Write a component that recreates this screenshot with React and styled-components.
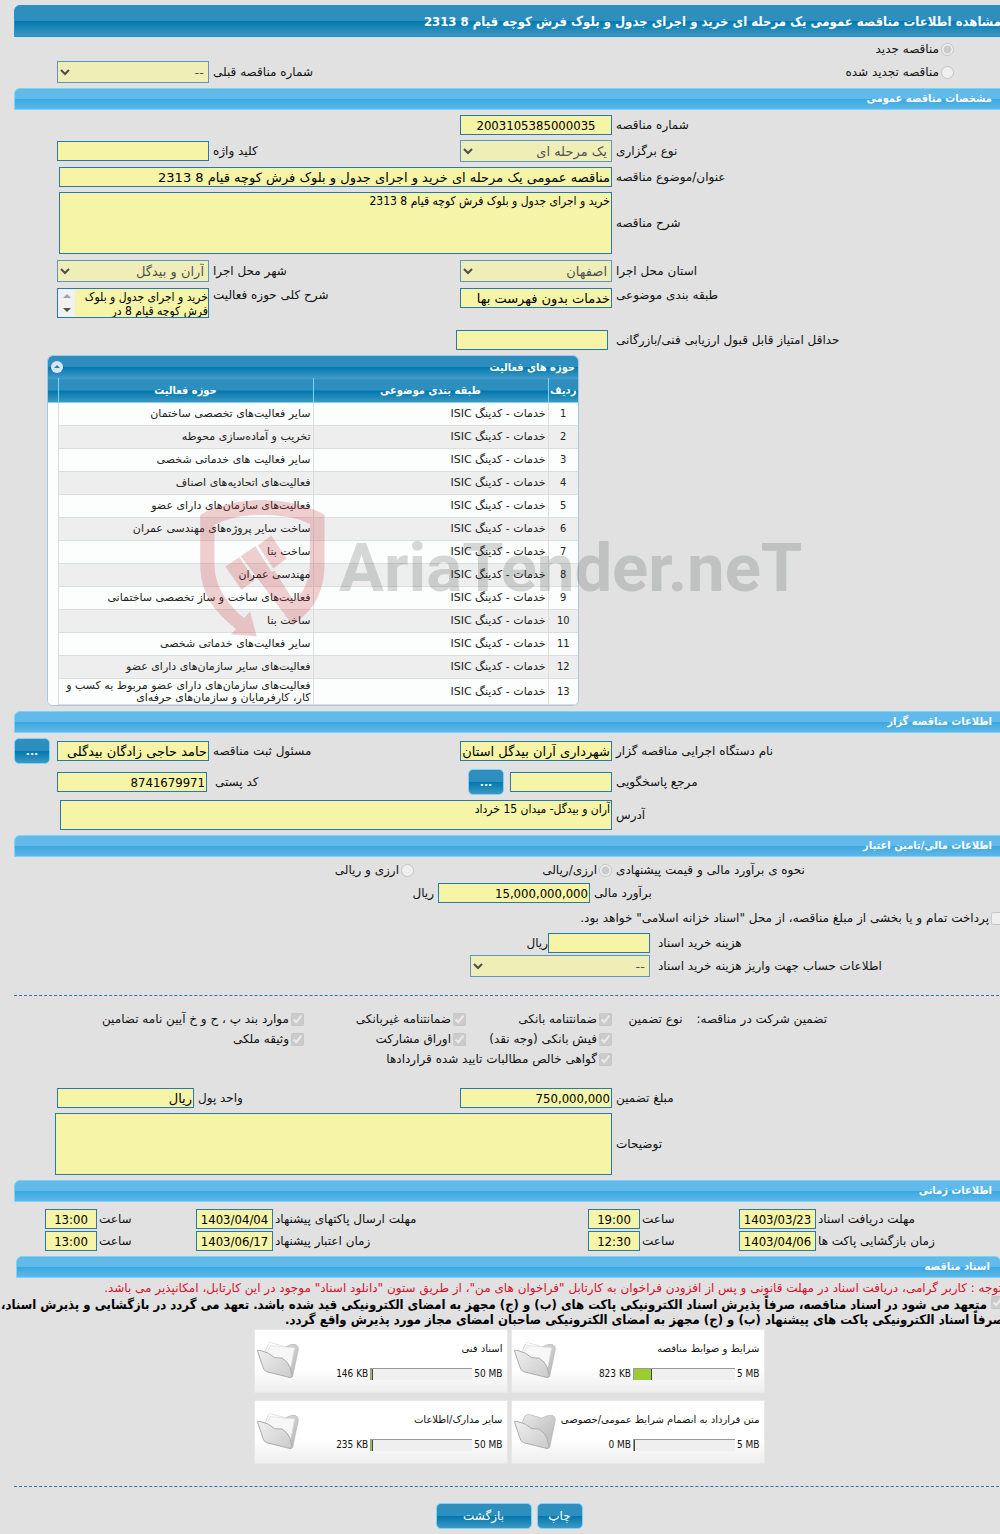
import React, { useId } from "react";
import styled, { createGlobalStyle } from "styled-components";

const activities = [
  "سایر فعالیت‌های تخصصی ساختمان",
  "تخریب و آماده‌سازی محوطه",
  "سایر فعالیت های خدماتی شخصی",
  "فعالیت‌های اتحادیه‌های اصناف",
  "فعالیت‌های سازمان‌های دارای عضو",
  "ساخت سایر پروژه‌های مهندسی عمران",
  "ساخت بنا",
  "مهندسی عمران",
  "فعالیت‌های ساخت و ساز تخصصی ساختمانی",
  "ساخت بنا",
  "سایر فعالیت‌های خدماتی شخصی",
  "فعالیت‌های سایر سازمان‌های دارای عضو",
  "فعالیت‌های سازمان‌های دارای عضو مربوط به کسب و کار، کارفرمایان و سازمان‌های حرفه‌ای"
];

const documents = [
  { title: "شرایط و ضوابط مناقصه", used: "823 KB", limit: "5 MB", percent: 18, full: true },
  { title: "اسناد فنی", used: "146 KB", limit: "50 MB", percent: 2, full: true },
  { title: "متن قرارداد به انضمام شرایط عمومی/خصوصی", used: "0 MB", limit: "5 MB", percent: 1, full: false },
  { title: "سایر مدارک/اطلاعات", used: "235 KB", limit: "50 MB", percent: 2, full: true }
];

const guarantees = [
  "ضمانتنامه بانکی",
  "ضمانتنامه غیربانکی",
  "موارد بند پ ، ح و خ آیین نامه تضامین",
  "فیش بانکی (وجه نقد)",
  "اوراق مشارکت",
  "وثیقه ملکی"
];

/**
 * Label and its text box. They are two cells of the surrounding row grid.
 */
function TextField({ label, value = "", align, pad }) {
  const id = useId();
  return (
    <>
      <Label htmlFor={id} $pad={pad}>{label}</Label>
      <Input
        id={id}
        defaultValue={value}
        $align={align}
        $numeric={/^[\d,:/]+$/.test(value)}
        readOnly
      />
    </>
  );
}

function SelectField({ label, value, pad }) {
  const id = useId();
  return (
    <>
      <Label htmlFor={id} $pad={pad}>{label}</Label>
      <Select id={id} disabled>
        <option>{value}</option>
      </Select>
    </>
  );
}

function AreaField({ label, value, height }) {
  const id = useId();
  return (
    <>
      <Label htmlFor={id}>{label}</Label>
      <TextArea id={id} defaultValue={value} $height={height} readOnly />
    </>
  );
}

function Option({ type = "checkbox", label, checked, name, wide }) {
  return (
    <OptionLabel $wide={wide}>
      <Tick type={type} name={name} defaultChecked={checked} disabled />
      {label}
    </OptionLabel>
  );
}

function ScrollField({ label, value }) {
  const id = useId();
  return (
    <>
      <Label htmlFor={id}>{label}</Label>
      <ScrollBox>
        <ScrollText id={id} defaultValue={value} readOnly />
        <ScrollBar aria-hidden="true">
          <svg width="8" height="4"><path d="M0 4 L4 0 L8 4Z" fill="#a3a3a3" /></svg>
          <svg width="8" height="4"><path d="M0 0 L4 4 L8 0Z" fill="#505050" /></svg>
        </ScrollBar>
      </ScrollBox>
    </>
  );
}

function ActivityPanel() {
  return (
    <Panel>
      <PanelTitle>
        حوزه های فعالیت
        <Collapse type="button" aria-label="بستن">
          <svg width="12" height="12" viewBox="0 0 12 12">
            <path d="M3 7 L6 4 L9 7Z" fill="#2e7fae" />
          </svg>
        </Collapse>
      </PanelTitle>
      <Table>
        <colgroup>
          <col width="30" />
          <col width="235" />
          <col width="255" />
          <col />
        </colgroup>
        <thead>
          <tr>
            <th>ردیف</th>
            <th>طبقه بندی موضوعی</th>
            <th>حوزه فعالیت</th>
            <th />
          </tr>
        </thead>
        <tbody>
          {activities.map((activity, index) => (
            <tr key={index}>
              <td>{index + 1}</td>
              <td>خدمات - کدینگ ISIC</td>
              <td>{activity}</td>
              <td />
            </tr>
          ))}
        </tbody>
      </Table>
    </Panel>
  );
}

function Folder({ full }) {
  return (
    <svg width="44" height="40" viewBox="0 0 132 120" aria-hidden="true">
      <defs>
        <linearGradient id="folderBack" x1="0" y1="0" x2="1" y2="1">
          <stop offset="0" stopColor="#e8e8e8" />
          <stop offset="1" stopColor="#b4b4b4" />
        </linearGradient>
        <linearGradient id="folderFront" x1="0" y1="0" x2="1" y2="1">
          <stop offset="0" stopColor="#f0f0f0" />
          <stop offset="1" stopColor="#cacaca" />
        </linearGradient>
      </defs>
      <path
        d="M26 36 L36 12 Q40 6 50 8 L78 16 Q86 20 92 16 L104 11 Q126 6 127 24 L110 106 Q106 112 98 108 L80 60Z"
        fill="url(#folderBack)"
        stroke="#b4b4b4"
        strokeWidth="2"
      />
      {full && (
        <>
          <path d="M26 36 L40 4 L88 17 L100 92Z" fill="#fff" stroke="#dcdcdc" strokeWidth="2" />
          <path d="M30 38 L44 14 L116 20 L103 88Z" fill="#f7f7f7" stroke="#d8d8d8" strokeWidth="2" />
        </>
      )}
      <path
        d="M4 28 L12 28 Q40 34 56 50 L78 51 Q94 60 102 78 L108 104 Q108 112 92 107 L32 92 Q22 88 20 76Z"
        fill="url(#folderFront)"
        stroke="#acacac"
        strokeWidth="3"
        strokeLinejoin="round"
      />
    </svg>
  );
}

function DocumentCard({ doc }) {
  return (
    <Card>
      <CardBody>
        <span>{doc.title}</span>
        <Usage>
          <span>{doc.used}</span>
          <UsageBar>
            <UsageFill $empty={!doc.full} style={{ width: `${doc.percent}%` }} />
          </UsageBar>
          <span>{doc.limit}</span>
        </Usage>
      </CardBody>
      <Folder full={doc.full} />
    </Card>
  );
}

function Watermark() {
  return (
    <WatermarkBox aria-hidden="true">
      <svg width="125" height="137" viewBox="510 300 375 412" fill="rgba(200, 50, 60, 0.23)">
        <path d="M510 345 C560 315 630 300 697 300 S840 318 884 345 V490 C884 590 840 640 788 676 L632 469 L676 439 L724 515 L734 513 L792 605 C825 575 838 540 840 490 V372 C800 352 750 345 697 345 S600 352 553 375 V490 C553 560 590 610 642 655 L660 635 L680 710 L602 704 L618 688 C560 640 510 590 510 490Z" />
        <path d="M586 500 L628 472 L674 541 L634 570Z" />
        <path d="M684 437 L724 407 L770 476 L730 506Z" />
      </svg>
      <Brand>AriaTender.neT</Brand>
    </WatermarkBox>
  );
}

/**
 * Read only view of a single-stage public tender
 */
export default function App() {
  return (
    <Page dir="rtl" lang="fa">
      <GlobalStyle />
      <TitleBar>مشاهده اطلاعات مناقصه عمومی یک مرحله ای خرید و اجرای جدول و بلوک فرش کوچه قیام 8 2313</TitleBar>
      <Form $gap={0} $top={0}>
        <Row $cols="50px 1fr" $height={24}>
          <span />
          <Option type="radio" name="kind" label="مناقصه جدید" checked />
        </Row>
        <Row $cols="50px 1fr 251px 152px 43px">
          <span />
          <Option type="radio" name="kind" label="مناقصه تجدید شده" />
          <SelectField label="شماره مناقصه قبلی" value="--" />
        </Row>
      </Form>

      <SectionBar>مشخصات مناقصه عمومی</SectionBar>
      <Form>
        <Row $cols="392px 152px">
          <TextField label="شماره مناقصه" value="2003105385000035" align="center" />
        </Row>
        <Row>
          <SelectField label="نوع برگزاری" value="یک مرحله ای" />
          <TextField label="کلید واژه" />
        </Row>
        <Row $cols="392px 1fr 45px">
          <TextField
            label="عنوان/موضوع مناقصه"
            value="مناقصه عمومی یک مرحله ای خرید و اجرای جدول و بلوک فرش کوچه قیام 8 2313"
          />
        </Row>
        <Row $cols="392px 1fr 45px">
          <AreaField label="شرح مناقصه" value="خرید و اجرای جدول و بلوک فرش کوچه قیام 8 2313" height={62} />
        </Row>
        <Row $height={24}>
          <SelectField label="استان محل اجرا" value="اصفهان" />
          <SelectField label="شهر محل اجرا" value="آران و بیدگل" />
        </Row>
        <Row $align="start" $height={37}>
          <TextField label="طبقه بندی موضوعی" value="خدمات بدون فهرست بها" />
          <ScrollField label="شرح کلی حوزه فعالیت" value="خرید و اجرای جدول و بلوک فرش کوچه قیام 8 در محدوده" />
        </Row>
        <Row $cols="396px 152px">
          <TextField label="حداقل امتیاز قابل قبول ارزیابی فنی/بازرگانی" pad={8} />
        </Row>
        <ActivityPanel />
      </Form>

      <SectionBar>اطلاعات مناقصه گزار</SectionBar>
      <Form>
        <Row>
          <TextField label="نام دستگاه اجرایی مناقصه گزار" value="شهرداری آران بیدگل استان اصفهان" />
          <TextField label="مسئول ثبت مناقصه" value="حامد حاجی زادگان بیدگلی" />
          <MoreButton type="button">...</MoreButton>
        </Row>
        <Row $cols="392px 102px 42px 1fr 150px 43px">
          <TextField label="مرجع پاسخگویی" />
          <MoreButton type="button">...</MoreButton>
          <TextField label="کد پستی" value="8741679971" pad={8} />
        </Row>
        <Row $cols="392px 1fr 46px">
          <AreaField label="آدرس" value="آران و بیدگل- میدان 15 خرداد" height={30} />
        </Row>
      </Form>

      <SectionBar>اطلاعات مالی/تامین اعتبار</SectionBar>
      <Form>
        <Row $cols="392px 198px 1fr" $height={16}>
          <Label as="span">نحوه ی برآورد مالی و قیمت پیشنهادی</Label>
          <Option type="radio" name="currency" label="ارزی/ریالی" checked />
          <Option type="radio" name="currency" label="ارزی و ریالی" />
        </Row>
        <Row $cols="414px 152px 1fr">
          <TextField label="برآورد مالی" value="15,000,000,000" />
          <Unit>ریال</Unit>
        </Row>
        <Row $cols="1fr">
          <Option label={'پرداخت تمام و یا بخشی از مبلغ مناقصه، از محل "اسناد خزانه اسلامی" خواهد بود.'} />
        </Row>
        <Stack>
          <Row $cols="354px 102px 1fr">
            <TextField label="هزینه خرید اسناد" pad={8} />
            <span>ریال</span>
          </Row>
          <Row $cols="354px 180px">
            <SelectField label="اطلاعات حساب جهت واریز هزینه خرید اسناد" value="--" pad={8} />
          </Row>
        </Stack>
      </Form>

      <Divider />
      <Guarantee>
        <GuaranteeHead>
          <span>تضمین شرکت در مناقصه:</span>
          <span>نوع تضمین</span>
        </GuaranteeHead>
        <OptionGrid>
          {guarantees.map(label => (
            <Option key={label} label={label} checked />
          ))}
          <Option label="گواهی خالص مطالبات تایید شده قراردادها" checked wide />
        </OptionGrid>
      </Guarantee>
      <Form $top={19}>
        <Row $cols="392px 152px 1fr 137px 43px">
          <TextField label="مبلغ تضمین" value="750,000,000" />
          <TextField label="واحد پول" value="ریال" />
        </Row>
        <Row $cols="392px 1fr 41px">
          <AreaField label="توضیحات" height={62} />
        </Row>
      </Form>

      <SectionBar>اطلاعات زمانی</SectionBar>
      <Form $gap={2} $top={7}>
        <Row $cols={timeColumns}>
          <TextField label="مهلت دریافت اسناد" value="1403/03/23" align="center" pad={2} />
          <TextField label="ساعت" value="19:00" align="center" pad={2} />
          <TextField label="مهلت ارسال پاکتهای پیشنهاد" value="1403/04/04" align="center" pad={2} />
          <TextField label="ساعت" value="13:00" align="center" pad={2} />
        </Row>
        <Row $cols={timeColumns}>
          <TextField label="زمان بازگشایی پاکت ها" value="1403/04/06" align="center" pad={2} />
          <TextField label="ساعت" value="12:30" align="center" pad={2} />
          <TextField label="زمان اعتبار پیشنهاد" value="1403/06/17" align="center" pad={2} />
          <TextField label="ساعت" value="13:00" align="center" pad={2} />
        </Row>
      </Form>

      <SectionBar $rounded>اسناد مناقصه</SectionBar>
      <Notice>
        توجه : کاربر گرامی، دریافت اسناد در مهلت قانونی و پس از افزودن فراخوان به کارتابل "فراخوان های من"، از طریق ستون "دانلود اسناد" موجود در این کارتابل، امکانپذیر می باشد.
      </Notice>
      <Pledge>
        <Tick type="checkbox" defaultChecked disabled />{" "}
        متعهد می شود در اسناد مناقصه، صرفاً پذیرش اسناد الکترونیکی پاکت های (ب) و (ج) مجهز به امضای الکترونیکی قید شده باشد. تعهد می گردد در بازگشایی و پذیرش اسناد،
        <br />
        صرفاً اسناد الکترونیکی پاکت های پیشنهاد (ب) و (ج) مجهز به امضای الکترونیکی صاحبان امضای مجاز مورد پذیرش واقع گردد.
      </Pledge>
      <Cards>
        {documents.map(doc => (
          <DocumentCard key={doc.title} doc={doc} />
        ))}
      </Cards>

      <Divider />
      <Actions>
        <ActionButton type="button">چاپ</ActionButton>
        <ActionButton type="button" $wide>بازگشت</ActionButton>
      </Actions>
      <Watermark />
    </Page>
  );
}

// -------------- STYLES

const fontStack = '"DejaVu Sans", sans-serif';
const narrowStack = '"DejaVu Sans Condensed", "DejaVu Sans", sans-serif';
const darkBlue = "linear-gradient(#2e8fbf 50%, #0078ae 50%, #3f98c2)";
const lightBlue = "linear-gradient(#62baea 50%, #3aa8e0 50%, #5eb7e8)";
const fieldBorder = "1px solid #2779aa";
const fieldColor = "#f6f4a6";
const timeColumns = "188px 77px 99px 52px 1fr 77px 99px 52px 31px";

const GlobalStyle = createGlobalStyle`
  * {
    box-sizing: border-box;
  }
  body {
    margin: 0;
    background: #e1e1e1;
    color: #111;
    font: 12px/14px ${fontStack};
    overflow-x: hidden;
  }
  input, select, textarea, button {
    margin: 0;
    font-family: inherit;
  }
`;

// The sheet runs slightly under the right edge of the window
const Page = styled.div`
  position: relative;
  margin-right: -4px;
  padding: 5px 0 5px 14px;
`;
const TitleBar = styled.h1`
  height: 32px;
  margin: 0;
  padding: 0 2px;
  border: 1px solid #2191d8;
  border-radius: 6px 0 0 0;
  background: ${darkBlue};
  color: #fff;
  font: bold 13px/32px ${narrowStack};
  white-space: nowrap;
`;
const SectionBar = styled.h2`
  height: 22px;
  margin: 0 ${props => (props.$rounded ? "3px 0 2px" : "0")};
  padding: 0 ${props => (props.$rounded ? "10px" : "11px")};
  border: 1px solid #79d4f8;
  border-radius: ${props => (props.$rounded ? "6px 6px 0 0" : "6px 0 0 0")};
  background: ${lightBlue};
  color: #fff;
  font: bold 11px/20px ${narrowStack};
`;
const Form = styled.div`
  display: flex;
  flex-direction: column;
  gap: ${({ $gap = 5 }) => $gap}px;
  padding: ${({ $top = 5 }) => $top}px 0 5px;
`;
const Stack = styled.div`
  display: flex;
  flex-direction: column;
  gap: 2px;
`;
const Row = styled.div`
  display: grid;
  grid-template-columns: ${({ $cols = "392px 152px 1fr 152px 43px" }) => $cols};
  align-items: ${({ $align = "center" }) => $align};
  min-height: ${({ $height = 20 }) => $height}px;
`;
const Label = styled.label`
  justify-self: end;
  padding-left: ${({ $pad = 4 }) => $pad}px;
  white-space: nowrap;
`;
const Input = styled.input`
  width: 100%;
  height: 20px;
  padding: 1px;
  border: ${fieldBorder};
  border-radius: 0;
  background: ${fieldColor};
  color: #000;
  font: 13px ${props => (props.$numeric ? narrowStack : fontStack)};
  text-align: ${({ $align = "start" }) => $align};
`;
const Select = styled.select`
  width: 100%;
  height: 22px;
  border: ${fieldBorder};
  border-radius: 0;
  background: ${fieldColor};
  font-size: 13px;

  &:disabled {
    color: #111;
    opacity: 0.7;
  }
`;
const TextArea = styled.textarea`
  width: 100%;
  height: ${props => props.$height}px;
  padding: 1px;
  border: ${fieldBorder};
  background: ${fieldColor};
  color: #000;
  font: 12px/14px ${narrowStack};
  resize: none;
`;
const ScrollBox = styled.div`
  display: flex;
  height: 30px;
  border: ${fieldBorder};
  background: ${fieldColor};
`;
const ScrollText = styled.textarea`
  flex: 1;
  min-width: 0;
  padding: 1px 0;
  border: 0;
  background: transparent;
  color: #000;
  font: 12px/14px ${narrowStack};
  overflow: hidden;
  resize: none;
`;
const ScrollBar = styled.div`
  display: flex;
  flex-direction: column;
  align-items: center;
  justify-content: space-around;
  width: 17px;
  background: #f1f1f1;
`;
const OptionLabel = styled.label`
  display: flex;
  align-items: center;
  gap: 2px;
  white-space: nowrap;
  grid-column: ${props => (props.$wide ? "span 2" : "auto")};
`;
const Tick = styled.input`
  width: 13px;
  height: 13px;
`;
const Unit = styled.span`
  padding-right: 4px;
`;
const blueButton = `
  border: 1px solid #79d4f8;
  border-radius: 5px;
  background: ${darkBlue};
  color: #fff;
`;
const MoreButton = styled.button`
  ${blueButton}
  justify-self: end;
  width: 36px;
  height: 26px;
  padding: 0;
  font-size: 11px;
  font-weight: bold;
`;
const Divider = styled.hr`
  width: 100%;
  margin: 13px 0;
  border: 0;
  border-top: 1px dashed #2779aa;
`;

const Panel = styled.section`
  align-self: flex-end;
  width: 532px;
  margin-left: 33px;
  border: 1px solid #a6c9e2;
  border-radius: 6px;
  background: #fcfdfd;
  overflow: hidden;
`;
const PanelTitle = styled.div`
  display: flex;
  align-items: center;
  justify-content: space-between;
  height: 22px;
  padding: 0 3px;
  background: ${darkBlue};
  color: #fff;
  font: bold 11px ${narrowStack};
`;
const Collapse = styled.button`
  display: flex;
  padding: 0;
  border: 0;
  border-radius: 6px;
  background: #d8e7f3;
`;
const Table = styled.table`
  width: 100%;
  border-collapse: collapse;
  table-layout: fixed;
  font-size: 11px;
  line-height: 12px;

  th {
    height: 24px;
    padding: 0;
    border-left: 1px solid #79d4f8;
    border-top: 1px solid #4297d7;
    border-bottom: 1px solid #79d4f8;
    background: ${darkBlue};
    color: #fff;
    font: bold 11px ${narrowStack};
  }
  td {
    height: 23px;
    padding: 0 2px;
    border-left: 1px solid #ddd;
    border-bottom: 1px solid #ddd;
    color: #222;
  }
  td:first-child {
    font-family: ${narrowStack};
    text-align: center;
  }
  tbody tr:nth-child(even) td {
    background: #eee;
  }
  tbody tr:last-child td {
    height: 26px;
  }
  th:last-child, td:last-child {
    border-left: 0;
  }
  tbody tr td:last-child {
    border-bottom: 0;
    background: #fcfdfd !important;
  }
`;

const Guarantee = styled.div`
  display: grid;
  grid-template-columns: 392px 1fr;
`;
const GuaranteeHead = styled.div`
  display: flex;
  gap: 14px;
  padding-right: 177px;
  line-height: 20px;
  white-space: nowrap;
`;
const OptionGrid = styled.div`
  display: grid;
  grid-template-columns: 146px 162px 1fr;
  grid-auto-rows: 20px;
`;

const Notice = styled.p`
  margin: 3px 0 1px;
  padding-right: 2px;
  color: #d8102e;
  white-space: nowrap;
`;
const Pledge = styled.label`
  display: block;
  color: #000;
  font: bold 13px/15px ${narrowStack};
  white-space: nowrap;
`;
const Cards = styled.div`
  display: grid;
  grid-template-columns: 254px 254px;
  justify-content: center;
  gap: 7px 3px;
  margin: 2px 0 22px;
`;
const Card = styled.article`
  display: flex;
  align-items: center;
  height: 64px;
  padding: 0 4px 0 1px;
  border: 1px solid #e8e8e8;
  background: linear-gradient(#fff 60%, #eee);
  font-size: 10px;
`;
const CardBody = styled.div`
  display: flex;
  flex: 1;
  flex-direction: column;
  gap: 11px;
`;
const Usage = styled.div`
  display: flex;
  align-items: center;
  justify-content: flex-end;
  gap: 2px;
  direction: ltr;
  font-family: ${narrowStack};
`;
const UsageBar = styled.div`
  width: 102px;
  height: 12px;
  border-top: 1px solid #999;
  border-left: 1px solid #999;
  background: #efefef;
`;
const UsageFill = styled.div`
  height: 100%;
  border-right: 1px solid #444;
  background: ${props => (props.$empty ? "transparent" : "#9acd32")};
`;
const Actions = styled.div`
  display: flex;
  justify-content: center;
  gap: 5px;
  padding-top: 3px;
`;
const ActionButton = styled.button`
  ${blueButton}
  width: ${props => (props.$wide ? "96px" : "46px")};
  height: 26px;
  padding: 0;
  font-size: 12px;
`;

const WatermarkBox = styled.div`
  position: absolute;
  top: 500px;
  left: 200px;
  display: flex;
  gap: 14px;
  direction: ltr;
  pointer-events: none;
`;
const Brand = styled.span`
  color: rgba(60, 65, 65, 0.2);
  font: bold 67px/136px Roboto, sans-serif;
`;
